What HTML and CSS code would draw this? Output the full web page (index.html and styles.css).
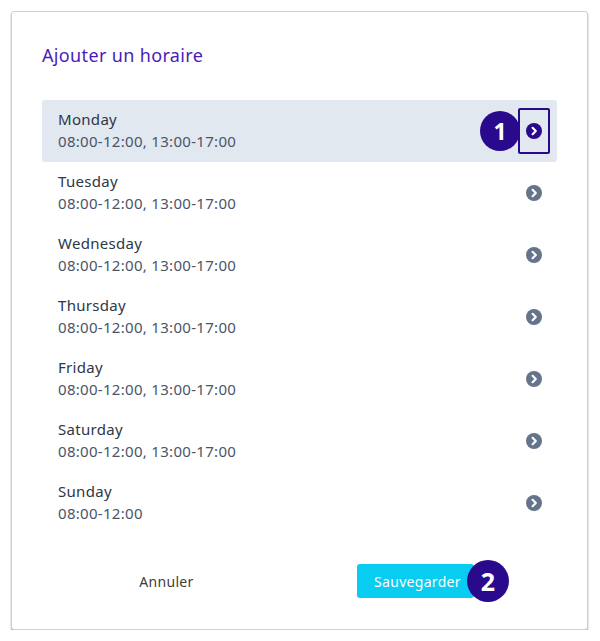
FILE: index.html
```html
<!DOCTYPE html>
<html lang="fr">
<head>
  <meta charset="UTF-8" />
  <meta name="viewport" content="width=device-width, initial-scale=1" />
  <title>Ajouter un horaire</title>
  <link rel="stylesheet" href="styles.css">
</head>
<body>
  <!-- Schedule dialog -->
  <section class="dialog">
    <h2 class="dialog-title">Ajouter un horaire</h2>

    <ul class="day-list">
      <li class="day-row active">
        <div class="day-info">
          <span class="day-name">Monday</span>
          <span class="day-hours">08:00-12:00, 13:00-17:00</span>
        </div>
        <button class="day-open focused" type="button" aria-label="Edit Monday">
          <span class="step step-one">1</span>
          <svg class="chevron" viewBox="0 0 16 16"><circle cx="8" cy="8" r="8"/><path d="M6.6 4.8 9.8 8l-3.2 3.2"/></svg>
        </button>
      </li>
      <li class="day-row">
        <div class="day-info">
          <span class="day-name">Tuesday</span>
          <span class="day-hours">08:00-12:00, 13:00-17:00</span>
        </div>
        <button class="day-open" type="button" aria-label="Edit Tuesday">
          <svg class="chevron" viewBox="0 0 16 16"><circle cx="8" cy="8" r="8"/><path d="M6.6 4.8 9.8 8l-3.2 3.2"/></svg>
        </button>
      </li>
      <li class="day-row">
        <div class="day-info">
          <span class="day-name">Wednesday</span>
          <span class="day-hours">08:00-12:00, 13:00-17:00</span>
        </div>
        <button class="day-open" type="button" aria-label="Edit Wednesday">
          <svg class="chevron" viewBox="0 0 16 16"><circle cx="8" cy="8" r="8"/><path d="M6.6 4.8 9.8 8l-3.2 3.2"/></svg>
        </button>
      </li>
      <li class="day-row">
        <div class="day-info">
          <span class="day-name">Thursday</span>
          <span class="day-hours">08:00-12:00, 13:00-17:00</span>
        </div>
        <button class="day-open" type="button" aria-label="Edit Thursday">
          <svg class="chevron" viewBox="0 0 16 16"><circle cx="8" cy="8" r="8"/><path d="M6.6 4.8 9.8 8l-3.2 3.2"/></svg>
        </button>
      </li>
      <li class="day-row">
        <div class="day-info">
          <span class="day-name">Friday</span>
          <span class="day-hours">08:00-12:00, 13:00-17:00</span>
        </div>
        <button class="day-open" type="button" aria-label="Edit Friday">
          <svg class="chevron" viewBox="0 0 16 16"><circle cx="8" cy="8" r="8"/><path d="M6.6 4.8 9.8 8l-3.2 3.2"/></svg>
        </button>
      </li>
      <li class="day-row">
        <div class="day-info">
          <span class="day-name">Saturday</span>
          <span class="day-hours">08:00-12:00, 13:00-17:00</span>
        </div>
        <button class="day-open" type="button" aria-label="Edit Saturday">
          <svg class="chevron" viewBox="0 0 16 16"><circle cx="8" cy="8" r="8"/><path d="M6.6 4.8 9.8 8l-3.2 3.2"/></svg>
        </button>
      </li>
      <li class="day-row">
        <div class="day-info">
          <span class="day-name">Sunday</span>
          <span class="day-hours">08:00-12:00</span>
        </div>
        <button class="day-open" type="button" aria-label="Edit Sunday">
          <svg class="chevron" viewBox="0 0 16 16"><circle cx="8" cy="8" r="8"/><path d="M6.6 4.8 9.8 8l-3.2 3.2"/></svg>
        </button>
      </li>
    </ul>

    <div class="dialog-actions">
      <button class="btn-cancel" type="button">Annuler</button>
      <button class="btn-save" type="button">
        Sauvegarder
        <span class="step step-two">2</span>
      </button>
    </div>
  </section>
</body>
</html>
```

FILE: styles.css
```css
/* Reset */
* {
  box-sizing: border-box;
  margin: 0;
  padding: 0;
  font-family: 'Noto Sans', 'Open Sans', sans-serif;
}

body {
  background: #fff;
  padding: 11px 13px 0 11px;
}

/* Dialog card */
.dialog {
  width: 577px;
  height: 619px;
  background: #fff;
  border: 1px solid #cfcfcf;
  border-radius: 3px;
  box-shadow: 0 2px 2px rgba(0,0,0,0.35);
  padding: 31px 30px 0 30px;
}

.dialog-title {
  font-size: 18px;
  line-height: 24px;
  font-weight: 400;
  letter-spacing: 0.35px;
  color: #4a1db8;
  margin-bottom: 33px;
}

/* Day list */
.day-list {
  list-style: none;
}

.day-row {
  display: flex;
  align-items: center;
  justify-content: space-between;
  height: 62px;
  padding: 0 7px 2px 16px;
  border-radius: 3px;
}

.day-row.active {
  background: #e2e8f0;
}

.day-info {
  display: flex;
  flex-direction: column;
}

.day-name {
  font-size: 15px;
  line-height: 22px;
  letter-spacing: 0.3px;
  color: #2d3748;
}

.day-hours {
  font-size: 15px;
  line-height: 22px;
  letter-spacing: 0.3px;
  color: #4a5568;
}

.day-open {
  position: relative;
  display: flex;
  align-items: center;
  justify-content: center;
  width: 32px;
  height: 46px;
  margin-top: 2px;
  border: 2px solid transparent;
  border-radius: 2px;
  background: none;
  cursor: pointer;
}

.day-open.focused {
  border-color: #2a0a8c;
}

.chevron {
  width: 16px;
  height: 16px;
}

.chevron circle {
  fill: #64748b;
}

.chevron path {
  fill: none;
  stroke: #fff;
  stroke-width: 2.2;
  stroke-linecap: round;
  stroke-linejoin: round;
}

.day-open.focused .chevron circle {
  fill: #2a0a8c;
}

/* Numbered callouts */
.step {
  position: absolute;
  display: flex;
  align-items: center;
  justify-content: center;
  border-radius: 50%;
  background: #2a0a8c;
  color: #fff;
  font-weight: 700;
}

.step-one {
  width: 40px;
  height: 40px;
  left: -40px;
  top: 1px;
  font-size: 23px;
}

.step-two {
  width: 42px;
  height: 42px;
  right: -35px;
  top: -4px;
  font-size: 25px;
}

/* Footer buttons */
.dialog-actions {
  display: flex;
  align-items: center;
  margin-top: 30px;
}

.btn-cancel {
  width: 117px;
  height: 34px;
  margin-left: 66px;
  background: none;
  border: none;
  font-size: 14px;
  letter-spacing: 0.3px;
  color: #3d3d3d;
  cursor: pointer;
}

.btn-save {
  position: relative;
  width: 117px;
  height: 34px;
  margin-left: 132px;
  background: #08cdf0;
  border: none;
  border-radius: 3px;
  color: #fff;
  font-size: 14px;
  letter-spacing: 0.3px;
  text-align: center;
  padding-left: 4px;
  cursor: pointer;
}
```
